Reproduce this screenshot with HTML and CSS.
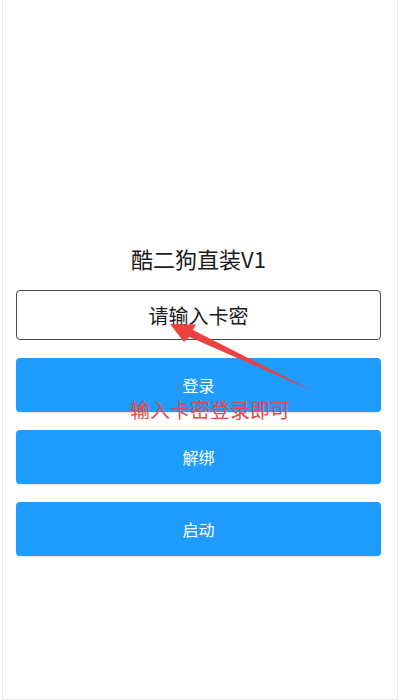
FILE: index.html
```html
<!DOCTYPE html>
<html lang="zh-CN">
<head>
<meta charset="utf-8">
<title>酷二狗直装V1</title>
<link rel="stylesheet" href="styles.css">
</head>
<body>
<div class="screen">
  <div class="panel">
    <h1 class="title">酷二狗直装V1</h1>
    <input class="card-input" type="text" placeholder="请输入卡密">
    <button class="btn">登录</button>
    <button class="btn">解绑</button>
    <button class="btn">启动</button>
  </div>
  <svg class="arrow" width="400" height="700" viewBox="0 0 400 700">
    <polygon points="170,324 196,324.5 193,330 315,392 189.5,337 184,342" fill="#ea4141"/>
  </svg>
  <div class="note">输入卡密登录即可</div>
</div>
</body>
</html>
```
FILE: styles.css
```css
html, body {
  margin: 0;
  padding: 0;
  background: #ffffff;
}
body {
  font-family: "Noto Sans CJK SC", "Noto Sans", sans-serif;
}
.screen {
  position: relative;
  box-sizing: border-box;
  width: 396px;
  height: 700px;
  margin: 0 2px;
  border-left: 1px solid #e8e8e8;
  border-right: 1px solid #e8e8e8;
  border-bottom: 1px solid #e8e8e8;
  overflow: hidden;
}
.panel {
  display: flex;
  flex-direction: column;
  padding: 243px 0 0 13px;
  width: 365px;
}
.title {
  margin: 0;
  height: 30px;
  line-height: 30px;
  font-size: 22px;
  font-weight: 400;
  color: #1a1a1a;
  text-align: center;
}
.card-input {
  box-sizing: border-box;
  margin-top: 17px;
  height: 50px;
  width: 100%;
  border: 1px solid #4a4a4a;
  border-radius: 4px;
  background: #fff;
  font-family: inherit;
  font-size: 20px;
  text-align: center;
  color: #1a1a1a;
  outline: none;
  padding: 0;
}
.card-input::placeholder {
  color: #1a1a1a;
  opacity: 1;
}
.btn {
  margin-top: 18px;
  height: 54px;
  width: 100%;
  border: none;
  border-radius: 4px;
  background: #1f9cff;
  color: #ffffff;
  font-family: inherit;
  font-size: 16px;
  box-shadow: 0 1px 2px rgba(0, 0, 0, 0.12);
  padding: 0;
}
.arrow {
  position: absolute;
  left: -3px;
  top: 0;
}
.note {
  position: absolute;
  left: 127px;
  top: 400px;
  font-size: 20px;
  line-height: 20px;
  color: #e04a4d;
  white-space: nowrap;
}
```
